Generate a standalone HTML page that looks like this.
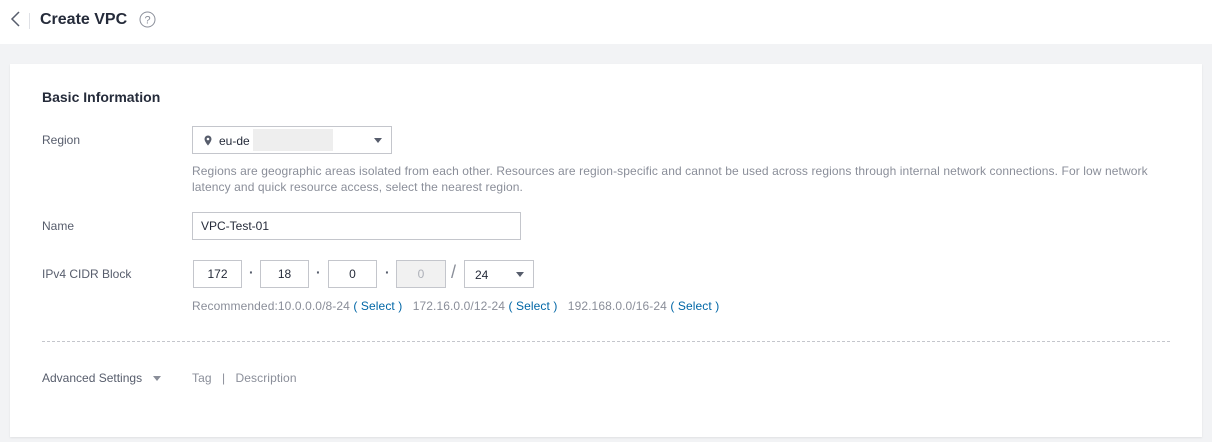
<!DOCTYPE html>
<html><head><style>
body{margin:0;width:1212px;height:442px;background:#f2f3f5;font-family:"Liberation Sans",sans-serif;position:relative;overflow:hidden;color:#252b3a}
.top{position:absolute;left:0;top:0;width:1212px;height:44px;background:#fff}
.card{position:absolute;left:10px;top:64px;width:1192px;height:373px;background:#fff;box-shadow:0 1px 2px rgba(0,0,0,.08)}
.a{position:absolute;white-space:nowrap}
.lbl{font-size:12px;color:#575d6c}
.box{position:absolute;border:1px solid #c4c6cc;box-sizing:border-box;background:#fff;font-size:12px;color:#252b3a}
.c{text-align:center;line-height:26px}
.tri{position:absolute;width:0;height:0;border-left:4px solid transparent;border-right:4px solid transparent;border-top:5px solid #575d6c}
.gray{font-size:12px;color:#8a8e99;letter-spacing:0.1px}
.dot{font-size:14px;color:#575d6c;font-weight:bold}
.blue{color:#0066a6}
</style></head><body>
<div class="top">
<svg class="a" style="left:9px;top:11px" width="12" height="16"><path d="M10 1 L3 8 L10 15" stroke="#575d6c" stroke-width="1.5" fill="none"/></svg>
<div class="a" style="left:29px;top:13px;width:1px;height:16px;background:#dfe1e6"></div>
<div class="a" style="left:40px;top:11px;font-size:16px;font-weight:bold">Create VPC</div>
<svg class="a" style="left:139px;top:11px" width="17" height="17"><circle cx="8.5" cy="8.5" r="7.5" stroke="#8a8e99" fill="none"/><text x="8.5" y="12.5" font-size="11" text-anchor="middle" fill="#8a8e99" font-family="Liberation Sans">?</text></svg>
</div>
<div class="card"></div>
<div class="a" style="left:42px;top:89px;font-size:14px;font-weight:bold">Basic Information</div>
<div class="a lbl" style="left:42px;top:133px">Region</div>
<div class="box" style="left:192px;top:126px;width:200px;height:28px">
<svg class="a" style="left:11px;top:8px" width="8" height="11"><path d="M4 0.5a3.5 3.5 0 0 1 3.5 3.5c0 2.5-3.5 6.5-3.5 6.5S0.5 6.5 0.5 4A3.5 3.5 0 0 1 4 0.5z" fill="#575d6c"/><circle cx="4" cy="4" r="1.3" fill="#fff"/></svg>
<div class="a" style="left:26px;top:7px">eu-de</div>
<div class="a" style="left:60px;top:2px;width:80px;height:22px;background:#eee"></div>
<div class="tri" style="left:181px;top:11px"></div></div>
<div class="a gray" style="left:192px;top:163px;line-height:16px;white-space:normal;width:975px">Regions are geographic areas isolated from each other. Resources are region-specific and cannot be used across regions through internal network connections. For low network latency and quick resource access, select the nearest region.</div>
<div class="a lbl" style="left:42px;top:219px">Name</div>
<div class="box" style="left:192px;top:212px;width:329px;height:28px;padding:6px 0 0 8px">VPC-Test-01</div>
<div class="a lbl" style="left:42px;top:267px">IPv4 CIDR Block</div>
<div class="box c" style="left:193px;top:260px;width:49px;height:28px">172</div>
<div class="a dot" style="left:249px;top:264px">·</div>
<div class="box c" style="left:260px;top:260px;width:49px;height:28px">18</div>
<div class="a dot" style="left:316px;top:264px">·</div>
<div class="box c" style="left:328px;top:260px;width:49px;height:28px">0</div>
<div class="a dot" style="left:385px;top:264px">·</div>
<div class="box c" style="left:396px;top:260px;width:50px;height:28px;background:#f1f1f1;color:#adb0b8">0</div>
<div class="a" style="left:451px;top:262px;font-size:18px;color:#8a8e99">/</div>
<div class="box" style="left:464px;top:260px;width:70px;height:28px"><div class="a" style="left:10px;top:7px">24</div><div class="tri" style="left:51px;top:11px"></div></div>
<div class="a gray" style="left:192px;top:299px">Recommended:10.0.0.0/8-24 <span class="blue">( Select )</span>&nbsp;&nbsp; 172.16.0.0/12-24 <span class="blue">( Select )</span>&nbsp;&nbsp; 192.168.0.0/16-24 <span class="blue">( Select )</span></div>
<div class="a" style="left:42px;top:341px;width:1128px;border-top:1px dashed #c4c6cc"></div>
<div class="a lbl" style="left:42px;top:371px">Advanced Settings</div>
<div class="tri" style="left:153px;top:376px;border-top-color:#8a8e99"></div>
<div class="a gray" style="left:192px;top:371px">Tag &nbsp;&nbsp;| &nbsp;&nbsp;Description</div>
</body></html>
